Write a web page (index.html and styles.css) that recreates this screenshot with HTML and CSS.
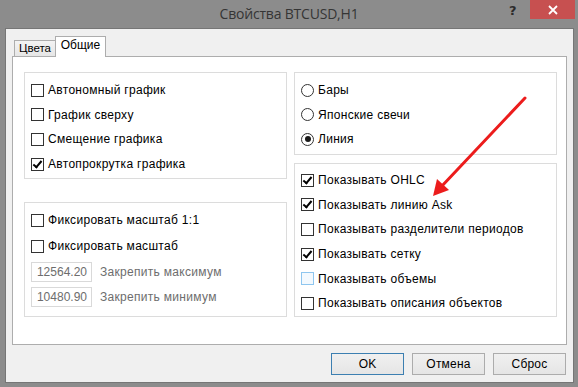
FILE: index.html
```html
<!DOCTYPE html>
<html lang="ru">
<head>
    <meta charset="UTF-8">
    <title>Свойства BTCUSD,H1</title>
    <link rel="stylesheet" href="styles.css">
</head>
<body>
    <div class="window">
        <div class="titlebar">
            <div class="title">Свойства BTCUSD,H1</div>
            <span class="help">?</span>
            <span class="close">
                <svg width="10" height="10" viewBox="0 0 10 10"><path d="M1 1 L9 9 M9 1 L1 9" stroke="#fff" stroke-width="1.8"/></svg>
            </span>
        </div>

        <div class="client">
            <div class="tabs">
                <span class="tab">Цвета</span>
                <span class="tab active">Общие</span>
            </div>

            <div class="panel">
                <div class="col">
                    <div class="group g-view">
                        <label class="row"><span class="check"></span>Автономный график</label>
                        <label class="row"><span class="check"></span>График сверху</label>
                        <label class="row"><span class="check"></span>Смещение графика</label>
                        <label class="row"><span class="check on"></span>Автопрокрутка графика</label>
                    </div>

                    <div class="group g-scale">
                        <label class="row tall"><span class="check"></span>Фиксировать масштаб 1:1</label>
                        <label class="row tall"><span class="check"></span>Фиксировать масштаб</label>
                        <div class="row field"><span class="num">12564.20</span>Закрепить максимум</div>
                        <div class="row field"><span class="num">10480.90</span>Закрепить минимум</div>
                    </div>
                </div>

                <div class="col">
                    <div class="group g-type">
                        <label class="row"><span class="radio"></span>Бары</label>
                        <label class="row"><span class="radio"></span>Японские свечи</label>
                        <label class="row"><span class="radio on"></span>Линия</label>
                    </div>

                    <div class="group g-show">
                        <label class="row"><span class="check on"></span>Показывать OHLC</label>
                        <label class="row"><span class="check on"></span>Показывать линию Ask</label>
                        <label class="row"><span class="check"></span>Показывать разделители периодов</label>
                        <label class="row"><span class="check on"></span>Показывать сетку</label>
                        <label class="row"><span class="check hover"></span>Показывать объемы</label>
                        <label class="row"><span class="check"></span>Показывать описания объектов</label>
                    </div>
                </div>
            </div>

            <div class="buttons">
                <button class="btn default">OK</button>
                <button class="btn">Отмена</button>
                <button class="btn">Сброс</button>
            </div>
        </div>

        <!-- red annotation arrow -->
        <svg class="arrow" width="578" height="387" viewBox="0 0 578 387">
            <path d="M525 98 L441 187" stroke="#ec1c1c" stroke-width="3" stroke-linecap="round"/>
            <path d="M433 196 L437 179 L449 190 Z" fill="#ec1c1c"/>
        </svg>
    </div>
</body>
</html>
```

FILE: styles.css
```css
* {
    box-sizing: border-box;
    margin: 0;
    padding: 0;
}

body {
    width: 578px;
    height: 387px;
    background: #8c8c8c;
    font-family: 'Liberation Sans', Arial, sans-serif;
    font-size: 12px;
    letter-spacing: 0.3px;
    color: #000;
    overflow: hidden;
}

.window {
    position: relative;
    height: 387px;
}

/* title bar */
.titlebar {
    height: 28px;
    display: flex;
    align-items: flex-start;
    padding-left: 69px;
}

.title {
    flex: 1;
    text-align: center;
    font-family: 'Open Sans', 'Noto Sans', sans-serif;
    font-size: 14px;
    color: #353535;
    line-height: 28px;
    letter-spacing: -0.2px;
}

.help {
    width: 21px;
    margin-top: 3px;
    font-family: 'DejaVu Sans', sans-serif;
    font-weight: bold;
    font-size: 13px;
    color: #2b2b2b;
}

.close {
    width: 45px;
    height: 19px;
    margin-right: 3px;
    background: #c75050;
    display: flex;
    align-items: center;
    justify-content: center;
}

/* client area */
.client {
    height: 355px;
    margin: 0 4px 0 5px;
    background: #f0f0f0;
    border: 1px solid #767676;
    padding: 7px 6px 0 6px;
}

.tabs {
    display: flex;
    align-items: flex-end;
    height: 20px;
    margin-left: 2px;
    position: relative;
    z-index: 1;
}

.tab {
    height: 16px;
    width: 42px;
    border: 1px solid #adadad;
    border-bottom: none;
    background: linear-gradient(#f3f3f3, #e6e6e6);
    font-size: 11.5px;
    line-height: 15px;
    text-align: center;
    letter-spacing: 0;
}

.tab.active {
    width: 51px;
    height: 21px;
    margin-left: -1px;
    margin-bottom: -1px;
    background: #fff;
    font-size: 12px;
    line-height: 17px;
}

.panel {
    height: 289px;
    background: #fff;
    border: 1px solid #adadad;
    display: flex;
    gap: 7px;
    padding: 15px 0 0 11px;
}

.col {
    width: 263px;
    display: flex;
    flex-direction: column;
}

.group {
    border: 1px solid #dcdcdc;
    padding: 5px 0 0 6px;
}

.g-view { height: 107px; }
.g-scale { height: 115px; margin-top: 23px; padding-top: 4px; }
.g-type { height: 83px; }
.g-show { height: 154px; margin-top: 8px; padding-top: 4px; }

.row {
    height: 24.6px;
    display: flex;
    align-items: center;
}

.row.tall { height: 26px; }
.row.field { height: 25px; color: #6d6d6d; }

.check, .radio {
    width: 13px;
    height: 13px;
    margin-right: 4px;
    border: 1px solid #333;
    background: #fff;
    flex-shrink: 0;
    position: relative;
}

.check.on::after {
    content: "";
    position: absolute;
    left: 3px;
    top: 0px;
    width: 3px;
    height: 7px;
    border: solid #000;
    border-width: 0 2px 2px 0;
    transform: rotate(40deg);
}

.check.hover {
    border-color: #8ec6ef;
    background: #f3f9fe;
}

.radio {
    border-radius: 50%;
}

.radio.on::after {
    content: "";
    position: absolute;
    left: 2.5px;
    top: 2.5px;
    width: 6px;
    height: 6px;
    border-radius: 50%;
    background: #1a1a1a;
}

.num {
    width: 61px;
    height: 20px;
    margin-right: 8px;
    border: 1px solid #d9d9d9;
    text-align: right;
    padding-right: 4px;
    line-height: 18px;
    letter-spacing: 0;
}

/* buttons */
.buttons {
    display: flex;
    justify-content: flex-end;
    gap: 8px;
    margin-top: 8px;
    padding-right: 1px;
}

.btn {
    width: 73px;
    height: 22px;
    font-family: inherit;
    font-size: 12px;
    letter-spacing: 0.2px;
    color: #000;
    border: 1px solid #acacac;
    background: linear-gradient(#f0f0f0, #e5e5e5);
}

.btn.default {
    border-color: #3c7fb1;
}

.arrow {
    position: absolute;
    left: 0;
    top: 0;
    pointer-events: none;
}
```
